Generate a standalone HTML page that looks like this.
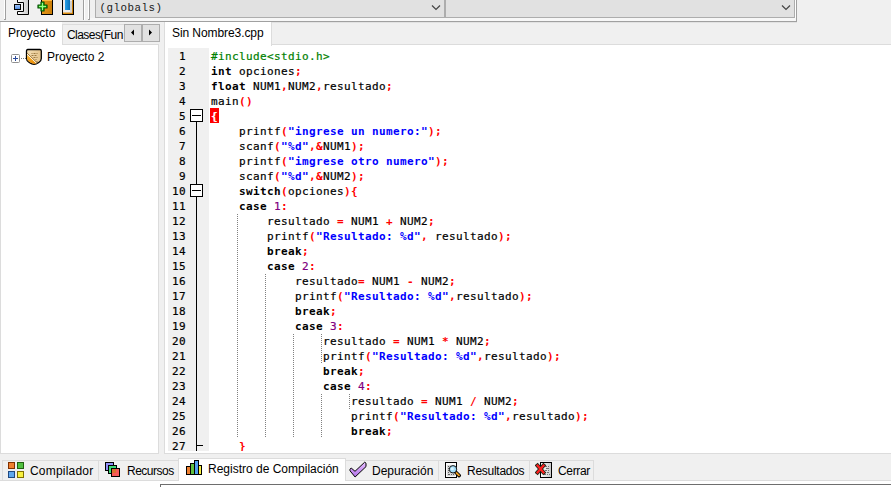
<!DOCTYPE html>
<html><head><meta charset="utf-8"><title>Dev-C++</title>
<style>
html,body{margin:0;padding:0;}
body{width:891px;height:487px;overflow:hidden;background:#f0f0f0;position:relative;font-family:"Liberation Sans",sans-serif;font-size:12px;color:#000;}
.abs{position:absolute;}
.ui{position:absolute;white-space:nowrap;font-size:12px;line-height:15px;color:#000;}
.mono{font-family:"DejaVu Sans Mono","Liberation Mono",monospace;font-size:11px;letter-spacing:0.3775px;}
.ln{position:absolute;left:167px;width:19px;height:15px;line-height:15px;text-align:right;font-family:"DejaVu Sans Mono","Liberation Mono",monospace;font-size:11px;letter-spacing:0.3775px;color:#000;white-space:pre;}
.cl{position:absolute;left:211px;height:15px;line-height:15px;font-family:"DejaVu Sans Mono","Liberation Mono",monospace;font-size:11px;letter-spacing:0.3775px;color:#000;white-space:pre;}
.cl,.ln{-webkit-text-stroke:0.2px currentColor;}
.k{font-weight:bold;-webkit-text-stroke:0;}
.s{font-weight:bold;color:#0000ff;-webkit-text-stroke:0;}
.y{font-weight:bold;color:#ff0000;-webkit-text-stroke:0;}
.n{color:#800080;}
.p{color:#008000;}
.hl{font-weight:bold;color:#fff;}
.guide{position:absolute;width:1px;background-image:repeating-linear-gradient(to bottom,#808080 0,#808080 1px,transparent 1px,transparent 2px);}
</style></head><body>

<!-- toolbar -->
<div class="abs" style="left:0;top:21px;width:797px;height:1px;background:#a0a0a0"></div>
<div class="abs" style="left:796px;top:0;width:1px;height:22px;background:#a0a0a0"></div>
<div class="abs" style="left:795px;top:0;width:1px;height:21px;background:#fff"></div>
<div class="abs" style="left:4px;top:0;width:1px;height:20px;background:#fff"></div>
<div class="abs" style="left:5px;top:0;width:1px;height:20px;background:#a0a0a0"></div>
<div class="abs" style="left:83px;top:0;width:1px;height:20px;background:#a0a0a0"></div>
<div class="abs" style="left:84px;top:0;width:1px;height:20px;background:#fff"></div>
<div class="abs" style="left:88px;top:0;width:1px;height:20px;background:#fff"></div>
<div class="abs" style="left:89px;top:0;width:1px;height:20px;background:#a0a0a0"></div>

<div class="abs" style="left:90px;top:18px;width:706px;height:3px;background:#f7f7f7"></div>
<div class="abs" style="left:4px;top:19px;width:2px;height:1px;background:#a0a0a0"></div>
<div class="abs" style="left:88px;top:19px;width:2px;height:1px;background:#a0a0a0"></div>
<!-- toolbar icons -->
<svg class="abs" style="left:12px;top:0" width="70" height="16" viewBox="12 0 70 16">
 <defs>
  <linearGradient id="g1" x1="0" x2="1" y1="0" y2="0"><stop offset="0" stop-color="#fff"/><stop offset="1" stop-color="#c8c8c8"/></linearGradient>
  <linearGradient id="g2" x1="0" x2="0" y1="0" y2="1"><stop offset="0" stop-color="#a8c8f8"/><stop offset="1" stop-color="#4888e0"/></linearGradient>
  <linearGradient id="g3" x1="0" x2="1" y1="0" y2="0"><stop offset="0" stop-color="#e89818"/><stop offset="1" stop-color="#c87c08"/></linearGradient>
  <linearGradient id="g4" x1="0" x2="1" y1="0" y2="0"><stop offset="0" stop-color="#28a0e8"/><stop offset="1" stop-color="#0870b8"/></linearGradient>
 </defs>
 <path d="M17.500 -1 V2.500 H23.500 V11.500 H17.500 V14.500 H28.500 V-1 Z" fill="url(#g1)" stroke="#000" stroke-width="1"/>
 <rect x="14.5" y="4.5" width="6" height="5" fill="url(#g2)" stroke="#000" stroke-width="1"/>
 <rect x="41.500" y="-1" width="11" height="15.500" fill="url(#g3)" stroke="#000" stroke-width="1"/>
 <rect x="42" y="0" width="10" height="1" fill="#ffb840"/>
 <path d="M41 2 h3 v3 h3 v3 h-3 v3 h-3 v-3 h-3 v-3 h3 z" fill="#30e020" stroke="#064a06" stroke-width="1.200" stroke-linejoin="round"/>
 <path d="M42.500 3 v7 M39 6.500 h7" stroke="#a0f890" stroke-width="1"/>
 <rect x="62.500" y="-1" width="11" height="15.500" fill="url(#g3)" stroke="#000" stroke-width="1"/>
 <rect x="63" y="0" width="9" height="12.500" fill="#ececec"/>
 <rect x="70" y="1" width="2" height="11.500" fill="#d0d0d0"/>
 <rect x="65" y="-1" width="5" height="11" fill="url(#g4)"/>
</svg>

<!-- combos -->
<div class="abs" style="left:95px;top:-4px;width:348px;height:20px;background:#e1e1e1;border:1px solid #adadad"></div>
<div class="abs" style="left:445px;top:-4px;width:348px;height:20px;background:#e1e1e1;border:1px solid #adadad"></div>
<div class="abs" style="left:99.500px;top:1px;letter-spacing:0.52px;font-family:'Liberation Mono',monospace;font-size:10.800px;line-height:14px;color:#1a1a1a;white-space:pre">(globals)</div>
<svg class="abs" style="left:430px;top:3px" width="12" height="10"><path d="M2 2.500 L6 6.500 L10 2.500" fill="none" stroke="#444" stroke-width="1.200"/></svg>
<svg class="abs" style="left:780px;top:3px" width="12" height="10"><path d="M2 2.500 L6 6.500 L10 2.500" fill="none" stroke="#444" stroke-width="1.200"/></svg>

<!-- left panel -->
<div class="abs" style="left:0;top:22px;width:159px;height:432px;background:#fff"></div>
<div class="abs" style="left:62px;top:22px;width:98px;height:23px;background:#f0f0f0"></div>
<div class="abs" style="left:62px;top:24px;width:97px;height:21px;border-left:1px solid #dcdcdc;border-top:1px solid #dcdcdc;border-bottom:1px solid #dcdcdc;box-sizing:border-box"></div>
<div class="abs" style="left:0;top:22px;width:1px;height:432px;background:#dcdcdc"></div>
<div class="abs" style="left:158px;top:44px;width:1px;height:410px;background:#dcdcdc"></div>
<div class="abs" style="left:0;top:453px;width:159px;height:1px;background:#dcdcdc"></div>
<div class="ui" style="left:8px;top:26px">Proyecto</div>
<div class="ui" style="left:67px;top:28px;width:57px;overflow:hidden;letter-spacing:-0.56px">Clases(Fun</div>
<div class="abs" style="left:124px;top:24px;width:18px;height:18px;box-sizing:border-box;background:#e1e1e1;border:1px solid #adadad"></div>
<div class="abs" style="left:142px;top:24px;width:18px;height:18px;box-sizing:border-box;background:#e1e1e1;border:1px solid #adadad"></div>
<svg class="abs" style="left:124px;top:24px" width="36" height="18"><path d="M10 5.500 L10 11.500 L7 8.500 Z M25 5.500 L25 11.500 L28 8.500 Z" fill="#000"/></svg>

<!-- tree -->
<div class="abs" style="left:11px;top:54px;width:9px;height:9px;box-sizing:border-box;border:1px solid #919191;border-radius:1.500px;background:#fff"></div>
<div class="abs" style="left:13px;top:58px;width:5px;height:1px;background:#2c4b9b"></div>
<div class="abs" style="left:15px;top:56px;width:1px;height:5px;background:#2c4b9b"></div>
<div class="abs" style="left:21px;top:58px;width:5px;height:1px;background-image:repeating-linear-gradient(to right,#808080 0,#808080 1px,transparent 1px,transparent 2px)"></div>
<svg class="abs" style="left:25px;top:48px" width="18" height="18" viewBox="0 0 18 18">
 <defs><linearGradient id="g7" x1="0" x2="1" y1="0" y2="0"><stop offset="0" stop-color="#f4e0b8"/><stop offset="1" stop-color="#e4c48c"/></linearGradient>
 <linearGradient id="g8" x1="0" x2="0" y1="0" y2="1"><stop offset="0" stop-color="#ffc040"/><stop offset="1" stop-color="#e88800"/></linearGradient></defs>
 <path d="M2.800 1.500 H15 Q16.300 1.500 16.300 3 V10.500 Q16.300 13 13.800 14.500 Q11 16.400 9 16.400 Q7 16.400 4.200 14.500 Q1.500 13 1.500 10.500 V3 Q1.500 1.500 2.800 1.500 Z" fill="url(#g7)" stroke="#000" stroke-width="1.300"/>
 <path d="M2.200 6.800 L11.300 15.500 Q10 15.900 9 15.800 Q7 15.800 4.500 14 Q2.200 12.500 2.200 10.500 Z" fill="url(#g8)"/>
 <path d="M2 6 L11.500 15.200" stroke="#fff" stroke-width="0.800"/>
 <path d="M2.200 5.200 L12.200 14.800" stroke="#8a5a10" stroke-width="0.800"/>
 <path d="M6.500 5.500h1M8.500 5.500h2M11.500 5.500h1M6.500 7.500h2M9.500 7.500h2M8.500 9.500h2M11.500 9.500h1M10.500 11.500h1M11.500 13.500h1" stroke="#9a7840" stroke-width="1"/>
</svg>
<div class="ui" style="left:47px;top:50px">Proyecto 2</div>

<!-- editor -->
<div class="abs" style="left:164px;top:22px;width:727px;height:23px;background:#f0f0f0"></div>
<div class="abs" style="left:164px;top:22px;width:633px;height:1px;background:#e2e2e2"></div>
<div class="abs" style="left:164px;top:44px;width:727px;height:410px;background:#fff;border-left:1px solid #dcdcdc;border-top:1px solid #dcdcdc;border-bottom:1px solid #dcdcdc;box-sizing:border-box"></div>
<div class="abs" style="left:164px;top:22px;width:108px;height:24px;background:#fff;border-left:1px solid #dcdcdc;border-right:1px solid #dcdcdc;box-sizing:border-box"></div>
<div class="ui" style="left:172px;top:26px;letter-spacing:-0.08px">Sin Nombre3.cpp</div>
<div class="abs" style="left:168px;top:48px;width:41px;height:403px;background:#f0f0f0"></div>

<!-- fold markers -->
<div class="abs" style="left:196px;top:121px;width:1px;height:330px;background:#000"></div>
<div class="abs" style="left:190px;top:109px;width:13px;height:13px;box-sizing:border-box;border:1px solid #000;background:#fff"></div>
<div class="abs" style="left:192px;top:115px;width:9px;height:1px;background:#000"></div>
<div class="abs" style="left:190px;top:184px;width:13px;height:13px;box-sizing:border-box;border:1px solid #000;background:#fff"></div>
<div class="abs" style="left:192px;top:190px;width:9px;height:1px;background:#000"></div>
<div class="abs" style="left:197px;top:445px;width:6px;height:1px;background:#000"></div>

<!-- indent guides -->
<div class="guide" style="left:237px;top:214px;height:224px"></div>
<div class="guide" style="left:265px;top:274px;height:164px"></div>
<div class="guide" style="left:293px;top:334px;height:104px"></div>
<div class="guide" style="left:321px;top:334px;height:30px"></div>
<div class="guide" style="left:321px;top:394px;height:44px"></div>
<div class="guide" style="left:349px;top:394px;height:15px"></div>

<!-- code -->
<div class="abs" style="left:210px;top:108px;width:9px;height:15px;background:#ff0000"></div>
<div class="abs" style="left:0;top:0;width:891px;height:451px;overflow:hidden">
<div class="ln" style="top:49px">1</div><div class="cl" style="top:49px"><span class="p">#include&lt;stdio.h&gt;</span></div>
<div class="ln" style="top:64px">2</div><div class="cl" style="top:64px"><span class="k">int</span> opciones<span class="y">;</span></div>
<div class="ln" style="top:79px">3</div><div class="cl" style="top:79px"><span class="k">float</span> NUM1<span class="y">,</span>NUM2<span class="y">,</span>resultado<span class="y">;</span></div>
<div class="ln" style="top:94px">4</div><div class="cl" style="top:94px">main<span class="y">()</span></div>
<div class="ln" style="top:109px">5</div><div class="cl" style="top:109px"><span class="hl">{</span></div>
<div class="ln" style="top:124px">6</div><div class="cl" style="top:124px">    printf<span class="y">(</span><span class="s">"ingrese un numero:"</span><span class="y">);</span></div>
<div class="ln" style="top:139px">7</div><div class="cl" style="top:139px">    scanf<span class="y">(</span><span class="s">"%d"</span><span class="y">,&amp;</span>NUM1<span class="y">);</span></div>
<div class="ln" style="top:154px">8</div><div class="cl" style="top:154px">    printf<span class="y">(</span><span class="s">"imgrese otro numero"</span><span class="y">);</span></div>
<div class="ln" style="top:169px">9</div><div class="cl" style="top:169px">    scanf<span class="y">(</span><span class="s">"%d"</span><span class="y">,&amp;</span>NUM2<span class="y">);</span></div>
<div class="ln" style="top:184px">10</div><div class="cl" style="top:184px">    <span class="k">switch</span><span class="y">(</span>opciones<span class="y">){</span></div>
<div class="ln" style="top:199px">11</div><div class="cl" style="top:199px">    <span class="k">case</span> <span class="n">1</span><span class="y">:</span></div>
<div class="ln" style="top:214px">12</div><div class="cl" style="top:214px">        resultado <span class="y">=</span> NUM1 <span class="y">+</span> NUM2<span class="y">;</span></div>
<div class="ln" style="top:229px">13</div><div class="cl" style="top:229px">        printf<span class="y">(</span><span class="s">"Resultado: %d"</span><span class="y">,</span> resultado<span class="y">);</span></div>
<div class="ln" style="top:244px">14</div><div class="cl" style="top:244px">        <span class="k">break</span><span class="y">;</span></div>
<div class="ln" style="top:259px">15</div><div class="cl" style="top:259px">        <span class="k">case</span> <span class="n">2</span><span class="y">:</span></div>
<div class="ln" style="top:274px">16</div><div class="cl" style="top:274px">            resultado<span class="y">=</span> NUM1 <span class="y">-</span> NUM2<span class="y">;</span></div>
<div class="ln" style="top:289px">17</div><div class="cl" style="top:289px">            printf<span class="y">(</span><span class="s">"Resultado: %d"</span><span class="y">,</span>resultado<span class="y">);</span></div>
<div class="ln" style="top:304px">18</div><div class="cl" style="top:304px">            <span class="k">break</span><span class="y">;</span></div>
<div class="ln" style="top:319px">19</div><div class="cl" style="top:319px">            <span class="k">case</span> <span class="n">3</span><span class="y">:</span></div>
<div class="ln" style="top:334px">20</div><div class="cl" style="top:334px">                resultado <span class="y">=</span> NUM1 <span class="y">*</span> NUM2<span class="y">;</span></div>
<div class="ln" style="top:349px">21</div><div class="cl" style="top:349px">                printf<span class="y">(</span><span class="s">"Resultado: %d"</span><span class="y">,</span>resultado<span class="y">);</span></div>
<div class="ln" style="top:364px">22</div><div class="cl" style="top:364px">                <span class="k">break</span><span class="y">;</span></div>
<div class="ln" style="top:379px">23</div><div class="cl" style="top:379px">                <span class="k">case</span> <span class="n">4</span><span class="y">:</span></div>
<div class="ln" style="top:394px">24</div><div class="cl" style="top:394px">                    resultado <span class="y">=</span> NUM1 <span class="y">/</span> NUM2<span class="y">;</span></div>
<div class="ln" style="top:409px">25</div><div class="cl" style="top:409px">                    printf<span class="y">(</span><span class="s">"Resultado: %d"</span><span class="y">,</span>resultado<span class="y">);</span></div>
<div class="ln" style="top:424px">26</div><div class="cl" style="top:424px">                    <span class="k">break</span><span class="y">;</span></div>
<div class="ln" style="top:439px">27</div><div class="cl" style="top:439px">    <span class="y">}</span></div>
</div>

<!-- bottom tabs -->
<div class="abs" style="left:0;top:480px;width:891px;height:1px;background:#dcdcdc"></div>
<div class="abs" style="left:0;top:481px;width:891px;height:6px;background:#fff"></div>
<div class="abs" style="left:160px;top:484px;width:731px;height:1px;background:#6e6e6e"></div>
<div class="abs" style="left:160px;top:484px;width:1px;height:3px;background:#6e6e6e"></div>
<div class="abs" style="left:2px;top:460px;width:592px;height:20px;box-sizing:border-box;border-top:1px solid #dcdcdc;border-left:1px solid #dcdcdc;border-right:1px solid #dcdcdc"></div>
<div class="abs" style="left:98px;top:461px;width:1px;height:19px;background:#dcdcdc"></div>
<div class="abs" style="left:178px;top:458px;width:168px;height:23px;box-sizing:border-box;background:#fff;border-left:1px solid #dcdcdc;border-right:1px solid #dcdcdc;border-top:1px solid #dcdcdc"></div>
<div class="abs" style="left:438px;top:461px;width:1px;height:19px;background:#dcdcdc"></div>
<div class="abs" style="left:529px;top:461px;width:1px;height:19px;background:#dcdcdc"></div>

<svg class="abs" style="left:8px;top:462px" width="16" height="16">
 <rect x="0.500" y="0.500" width="6" height="6" fill="#f08030" stroke="#803000"/>
 <rect x="9.500" y="0.500" width="6" height="6" fill="#50c040" stroke="#206010"/>
 <rect x="0.500" y="9.500" width="6" height="6" fill="#60a8f0" stroke="#204880"/>
 <rect x="9.500" y="9.500" width="6" height="6" fill="#f8f040" stroke="#807000"/>
</svg>
<div class="ui" style="left:30px;top:464px;letter-spacing:0.2px">Compilador</div>
<svg class="abs" style="left:105px;top:462px" width="16" height="16">
 <rect x="0.500" y="0.500" width="8" height="8" fill="#9090f8" stroke="#000"/>
 <rect x="3.500" y="3.500" width="8" height="8" fill="#40d878" stroke="#000"/>
 <rect x="6.500" y="6.500" width="8" height="8" fill="#f85858" stroke="#000"/>
 <rect x="7" y="7" width="4" height="4" fill="#d87030"/>
</svg>
<div class="ui" style="left:127px;top:464px;letter-spacing:-0.5px">Recursos</div>
<svg class="abs" style="left:186px;top:460px" width="16" height="16">
 <rect x="0.500" y="6.500" width="4" height="8" fill="#f08030" stroke="#000"/>
 <rect x="4.500" y="3.500" width="4" height="11" fill="#60c040" stroke="#000"/>
 <rect x="8.500" y="0.500" width="4" height="14" fill="#50a0f0" stroke="#000"/>
 <rect x="12.500" y="5.500" width="3" height="9" fill="#f8f040" stroke="#000"/>
</svg>
<div class="ui" style="left:208px;top:462px">Registro de Compilación</div>
<svg class="abs" style="left:349px;top:461px" width="19" height="18"><defs><linearGradient id="g5" x1="0" x2="0" y1="0" y2="1"><stop offset="0" stop-color="#e8c0ff"/><stop offset="1" stop-color="#b070e8"/></linearGradient></defs><path d="M2.200 7 L6 10.300 L15.700 1.200 L17 2.200 L17 5.600 L6.100 16 L1 9.800 L1 8.200 Z" fill="url(#g5)" stroke="#000" stroke-width="1" stroke-linejoin="round"/></svg>
<div class="ui" style="left:372px;top:464px">Depuración</div>
<svg class="abs" style="left:444px;top:461px" width="19" height="18">
 <rect x="1.500" y="1.500" width="11" height="15" fill="#fafafa" stroke="#000"/>
 <rect x="3" y="4" width="8" height="11" fill="#d8d8d8"/>
 <path d="M4 5.500h1M4 7.500h1M4 9.500h1M4 11.500h1M4 13.500h2M7 13.500h1M9 13.500h1" stroke="#606060"/>
 <path d="M12 11.500 L15.200 14.600" stroke="#000" stroke-width="3.600" stroke-linecap="round"/>
 <path d="M12.500 12 L15 14.400" stroke="#f0a020" stroke-width="1.800" stroke-linecap="round"/>
 <circle cx="9" cy="8.300" r="3.700" fill="#a0dcf8" stroke="#181818" stroke-width="1"/>
 <circle cx="8.300" cy="7.800" r="1.500" fill="#d8f4ff"/>
</svg>
<div class="ui" style="left:467px;top:464px;letter-spacing:-0.27px">Resultados</div>
<svg class="abs" style="left:535px;top:461px" width="19" height="18">
 <defs><linearGradient id="g6" x1="0" x2="1" y1="0" y2="0"><stop offset="0" stop-color="#fff"/><stop offset="1" stop-color="#c8c8c8"/></linearGradient></defs>
 <rect x="5.500" y="1.500" width="11" height="15" fill="url(#g6)" stroke="#000"/>
 <path d="M10 5.500h2M13 5.500h1M11 7.500h3M10 9.500h2M13 9.500h1M12 11.500h2M9 13.500h2M12 13.500h1M14 13.500h1" stroke="#707070"/>
 <path d="M2.500 4.500 L8.500 11.500 M8.500 4.500 L2.500 11.500" stroke="#202818" stroke-width="4" stroke-linecap="square"/>
 <path d="M2.500 4.500 L8.500 11.500 M8.500 4.500 L2.500 11.500" stroke="#ff2020" stroke-width="2.200" stroke-linecap="square"/>
</svg>
<div class="ui" style="left:558px;top:464px;letter-spacing:-0.33px">Cerrar</div>

</body></html>
